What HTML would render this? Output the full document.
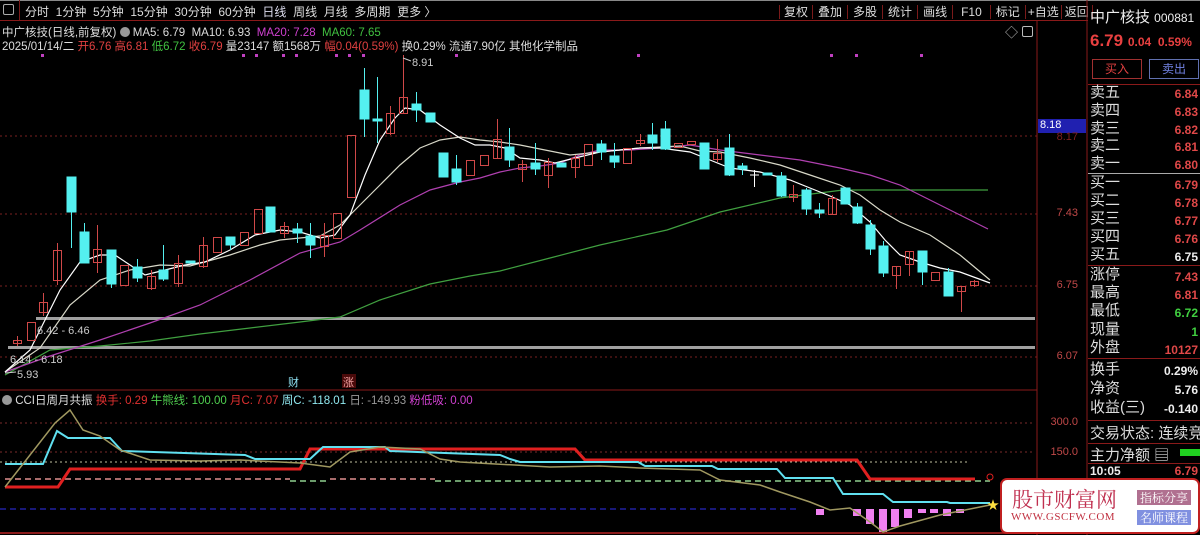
<!DOCTYPE html>
<html><head><meta charset="utf-8">
<style>
*{margin:0;padding:0;box-sizing:border-box}
body{width:1200px;height:535px;background:#000;overflow:hidden;position:relative;font-family:"Liberation Sans","Noto Sans CJK SC",sans-serif;color:#ccc}
.a{position:absolute;white-space:nowrap}
.tb{font-size:12px;color:#ddd;top:3px}
.rp{font-size:15px;color:#ddd;left:1090px}
.rv{font-size:12px;font-weight:bold;right:2px;text-align:right}
.ax{font-size:11px;color:#c04848;right:122px;text-align:right}
</style></head><body>
<div class="a" style="left:0;top:0;width:1200px;height:1px;background:#888"></div>
<div class="a" style="left:0;top:20px;width:1088px;height:1px;background:#8a1a1a"></div>
<!-- toolbar -->
<div class="a tb" style="left:3px;top:4px;width:11px;height:11px;border:1px solid #aaa;border-radius:2px"></div>
<div class="a" style="left:19px;top:0;width:1px;height:20px;background:#7a1a1a"></div>
<div class="a tb" style="left:25px">分时&nbsp;&nbsp;1分钟&nbsp;&nbsp;5分钟&nbsp;&nbsp;15分钟&nbsp;&nbsp;30分钟&nbsp;&nbsp;60分钟&nbsp;&nbsp;<span style="color:#dde">日线</span>&nbsp;&nbsp;周线&nbsp;&nbsp;月线&nbsp;&nbsp;多周期&nbsp;&nbsp;更多 〉</div>
<div class="a tb" style="left:779px;word-spacing:0">
<span style="border-left:1px solid #7a1a1a;padding:0 4px">复权</span><span style="border-left:1px solid #7a1a1a;padding:0 5px">叠加</span><span style="border-left:1px solid #7a1a1a;padding:0 5px">多股</span><span style="border-left:1px solid #7a1a1a;padding:0 5px">统计</span><span style="border-left:1px solid #7a1a1a;padding:0 5px">画线</span><span style="border-left:1px solid #7a1a1a;padding:0 8px">F10</span><span style="border-left:1px solid #7a1a1a;padding:0 5px">标记</span><span style="border-left:1px solid #7a1a1a;padding:0 2px">+自选</span><span style="border-left:1px solid #7a1a1a;border-right:1px solid #7a1a1a;padding:0 3px">返回</span></div>
<!-- info -->
<div class="a" style="left:2px;top:24px;font-size:11.5px;color:#ddd">中广核技(日线,前复权) <span style="display:inline-block;width:10px;height:10px;border-radius:5px;background:#999;vertical-align:-1px"></span> MA5: 6.79&nbsp; MA10: 6.93&nbsp; <span style="color:#d040d0">MA20: 7.28</span>&nbsp; <span style="color:#40c040">MA60: 7.65</span></div>
<div class="a" style="left:2px;top:38px;font-size:11.5px;color:#ddd">2025/01/14/二 <span style="color:#e04040">开6.76 高6.81</span> <span style="color:#40c040">低6.72</span> <span style="color:#e04040">收6.79</span> 量23147 额1568万 <span style="color:#e04040">幅0.04(0.59%)</span> 换0.29% 流通7.90亿 其他化学制品</div>
<div class="a" style="left:1005px;top:22px;font-size:13px;color:#bbb">◇</div>
<div class="a" style="left:1022px;top:26px;width:11px;height:11px;border:1px solid #bbb;border-radius:2px"></div>
<svg class="a" style="left:0;top:0" width="1088" height="535">
<g fill="#c040c0">
<rect x="41" y="54" width="3" height="3"/><rect x="242" y="54" width="3" height="3"/><rect x="255" y="54" width="3" height="3"/><rect x="282" y="54" width="3" height="3"/><rect x="295" y="54" width="3" height="3"/><rect x="335" y="54" width="3" height="3"/><rect x="348" y="54" width="3" height="3"/><rect x="362" y="54" width="3" height="3"/><rect x="455" y="54" width="3" height="3"/><rect x="637" y="54" width="3" height="3"/><rect x="830" y="54" width="3" height="3"/><rect x="855" y="54" width="3" height="3"/><rect x="920" y="54" width="3" height="3"/>
</g>
<g stroke="#7a2020" stroke-dasharray="2,3" stroke-width="1">
<line x1="0" y1="136" x2="1037" y2="136"/><line x1="0" y1="214" x2="1037" y2="214"/><line x1="0" y1="286" x2="1037" y2="286"/><line x1="0" y1="357" x2="1037" y2="357"/>
</g>
<rect x="36" y="317" width="999" height="3" fill="#a0a0a0"/>
<rect x="8" y="346" width="1027" height="3" fill="#a0a0a0"/>
<line x1="1037" y1="20" x2="1037" y2="535" stroke="#8a1a1a"/>
<line x1="1087" y1="0" x2="1087" y2="535" stroke="#8a1a1a"/>
<line x1="0" y1="390" x2="1037" y2="390" stroke="#8a1a1a"/>
<line x1="0" y1="533" x2="1037" y2="533" stroke="#8a1a1a" stroke-width="2"/>
<!-- MAs -->
<g fill="none" stroke-width="1.2">
<polyline stroke="#40a040" points="5,375 50,350 100,346 150,341 200,334 250,328 300,322 340,317 380,300 430,284 470,276 500,271 550,258 600,245 667,230 720,212 780,198 843,190 900,190 988,190"/>
<polyline stroke="#b040b0" points="5,372 50,356 100,340 150,323 200,305 250,280 300,253 340,242 360,230 400,205 430,190 460,182 480,178 500,172 520,168 540,166 560,163 580,155 600,150 630,150 660,148 690,145 720,150 760,155 800,160 840,168 870,175 900,185 930,200 960,215 988,229"/>
<polyline stroke="#d8d8c8" points="5,372 40,348 70,305 100,280 130,270 160,265 190,266 230,255 260,245 280,240 300,238 320,236 340,225 360,205 380,185 400,165 420,148 440,140 460,137 480,140 500,142 520,145 545,150 570,155 600,152 640,148 680,146 700,151 720,152 750,158 780,165 810,175 840,185 860,195 880,210 900,222 930,235 960,255 990,280"/>
<polyline stroke="#ffffff" points="5,372 30,350 60,290 80,262 100,255 115,255 130,265 145,275 165,270 185,265 205,262 230,250 255,235 280,230 300,232 320,238 335,235 350,215 365,175 380,140 395,118 405,108 420,110 440,125 460,138 475,145 490,145 505,148 520,158 540,160 555,163 575,158 600,152 620,150 640,148 660,148 690,152 710,160 730,168 760,172 790,180 810,188 830,196 850,205 870,222 885,240 900,255 920,262 940,268 960,272 990,283"/>
</g>
<!-- candles -->
<g stroke="#d04848" fill="none" stroke-width="1">
<line x1="17.5" y1="336" x2="17.5" y2="346"/><rect x="13.5" y="340.5" width="8" height="3"/>
<rect x="27.5" y="322.5" width="8" height="18"/>
<line x1="43.5" y1="293" x2="43.5" y2="316"/><rect x="39.5" y="302.5" width="8" height="10"/>
<line x1="57.5" y1="243" x2="57.5" y2="285"/><rect x="53.5" y="250.5" width="8" height="30"/>
<line x1="97.5" y1="225" x2="97.5" y2="273"/><rect x="93.5" y="249.5" width="8" height="13"/>
<rect x="120.5" y="265.5" width="8" height="20"/>
<line x1="151.5" y1="270" x2="151.5" y2="290"/><rect x="147.5" y="276.5" width="8" height="12"/>
<line x1="178.5" y1="255" x2="178.5" y2="287"/><rect x="174.5" y="263.5" width="8" height="20"/>
<line x1="203.5" y1="237" x2="203.5" y2="268"/><rect x="199.5" y="245.5" width="8" height="21"/>
<rect x="213.5" y="237.5" width="8" height="15"/>
<rect x="240.5" y="232.5" width="8" height="13"/>
<rect x="254.5" y="209.5" width="8" height="24"/>
<line x1="284.5" y1="222" x2="284.5" y2="238"/><rect x="280.5" y="226.5" width="8" height="7"/>
<line x1="324.5" y1="223" x2="324.5" y2="257"/><rect x="320.5" y="235.5" width="8" height="11"/>
<rect x="333.5" y="213.5" width="8" height="25"/>
<rect x="347.5" y="135.5" width="8" height="62"/>
<line x1="390.5" y1="106" x2="390.5" y2="135"/><rect x="386.5" y="113.5" width="8" height="20"/>
<line x1="403.5" y1="55" x2="403.5" y2="113"/><rect x="399.5" y="97.5" width="8" height="16"/>
<rect x="466.5" y="160.5" width="8" height="15"/>
<rect x="480.5" y="155.5" width="8" height="10"/>
<line x1="497.5" y1="119" x2="497.5" y2="158"/><rect x="493.5" y="139.5" width="8" height="19"/>
<line x1="522.5" y1="160" x2="522.5" y2="182"/><rect x="518.5" y="164.5" width="8" height="5"/>
<line x1="548.5" y1="158" x2="548.5" y2="188"/><rect x="544.5" y="162.5" width="8" height="13"/>
<line x1="575.5" y1="155" x2="575.5" y2="178"/><rect x="571.5" y="158.5" width="8" height="9"/>
<rect x="584.5" y="144.5" width="8" height="21"/>
<rect x="623.5" y="148.5" width="8" height="15"/>
<line x1="640.5" y1="134" x2="640.5" y2="146"/><rect x="636.5" y="140.5" width="8" height="3"/>
<rect x="674.5" y="143.5" width="8" height="4"/>
<rect x="687.5" y="141.5" width="8" height="3"/>
<line x1="717.5" y1="139" x2="717.5" y2="162"/><rect x="713.5" y="153.5" width="8" height="6"/>
<line x1="793.5" y1="185" x2="793.5" y2="202"/><rect x="789.5" y="194.5" width="8" height="3"/>
<line x1="832.5" y1="195" x2="832.5" y2="214"/><rect x="828.5" y="198.5" width="8" height="16"/>
<line x1="896.5" y1="266" x2="896.5" y2="289"/><rect x="892.5" y="266.5" width="8" height="9"/>
<line x1="909.5" y1="251" x2="909.5" y2="276"/><rect x="905.5" y="251.5" width="8" height="13"/>
<rect x="931.5" y="272.5" width="8" height="8"/>
<line x1="961.5" y1="286" x2="961.5" y2="312"/><rect x="957.5" y="286.5" width="8" height="5"/>
<line x1="974.5" y1="280" x2="974.5" y2="287"/><rect x="970.5" y="281.5" width="8" height="4"/>
</g>
<g fill="#54f0f0" stroke="#54f0f0" stroke-width="1">
<line x1="71.5" y1="177" x2="71.5" y2="248"/><rect x="67" y="177" width="9" height="35"/>
<line x1="84.5" y1="223" x2="84.5" y2="263"/><rect x="80" y="232" width="9" height="31"/>
<line x1="111.5" y1="250" x2="111.5" y2="288"/><rect x="107" y="250" width="9" height="34"/>
<line x1="137.5" y1="259" x2="137.5" y2="282"/><rect x="133" y="267" width="9" height="11"/>
<line x1="163.5" y1="245" x2="163.5" y2="281"/><rect x="159" y="270" width="9" height="9"/>
<rect x="186" y="261" width="9" height="2"/>
<line x1="230.5" y1="237" x2="230.5" y2="250"/><rect x="226" y="237" width="9" height="8"/>
<rect x="266" y="207" width="9" height="25"/>
<line x1="297.5" y1="223" x2="297.5" y2="243"/><rect x="293" y="229" width="9" height="4"/>
<line x1="310.5" y1="223" x2="310.5" y2="258"/><rect x="306" y="236" width="9" height="9"/>
<line x1="364.5" y1="68" x2="364.5" y2="137"/><rect x="360" y="90" width="9" height="29"/>
<line x1="377.5" y1="77" x2="377.5" y2="143"/><rect x="373" y="119" width="9" height="2"/>
<line x1="416.5" y1="92" x2="416.5" y2="122"/><rect x="412" y="104" width="9" height="6"/>
<rect x="426" y="113" width="9" height="9"/>
<rect x="439" y="153" width="9" height="24"/>
<line x1="456.5" y1="155" x2="456.5" y2="185"/><rect x="452" y="169" width="9" height="13"/>
<line x1="509.5" y1="128" x2="509.5" y2="167"/><rect x="505" y="147" width="9" height="13"/>
<line x1="535.5" y1="143" x2="535.5" y2="175"/><rect x="531" y="163" width="9" height="6"/>
<rect x="557" y="163" width="9" height="4"/>
<line x1="601.5" y1="140" x2="601.5" y2="160"/><rect x="597" y="144" width="9" height="8"/>
<line x1="614.5" y1="143" x2="614.5" y2="168"/><rect x="610" y="156" width="9" height="6"/>
<line x1="652.5" y1="123" x2="652.5" y2="150"/><rect x="648" y="135" width="9" height="8"/>
<line x1="665.5" y1="121" x2="665.5" y2="150"/><rect x="661" y="129" width="9" height="20"/>
<rect x="700" y="143" width="9" height="26"/>
<line x1="729.5" y1="134" x2="729.5" y2="176"/><rect x="725" y="148" width="9" height="27"/>
<line x1="742.5" y1="163" x2="742.5" y2="175"/><rect x="738" y="166" width="9" height="3"/>
<rect x="763" y="173" width="9" height="2"/>
<line x1="781.5" y1="172" x2="781.5" y2="197"/><rect x="777" y="176" width="9" height="20"/>
<line x1="806.5" y1="188" x2="806.5" y2="215"/><rect x="802" y="190" width="9" height="19"/>
<line x1="819.5" y1="203" x2="819.5" y2="218"/><rect x="815" y="210" width="9" height="3"/>
<rect x="841" y="188" width="9" height="16"/>
<line x1="857.5" y1="203" x2="857.5" y2="224"/><rect x="853" y="207" width="9" height="16"/>
<line x1="870.5" y1="220" x2="870.5" y2="255"/><rect x="866" y="225" width="9" height="24"/>
<line x1="883.5" y1="241" x2="883.5" y2="277"/><rect x="879" y="246" width="9" height="27"/>
<line x1="922.5" y1="251" x2="922.5" y2="285"/><rect x="918" y="251" width="9" height="21"/>
<line x1="948.5" y1="268" x2="948.5" y2="296"/><rect x="944" y="272" width="9" height="24"/>
</g>
<g stroke="#fff"><line x1="750" y1="175" x2="759" y2="175"/><line x1="754.5" y1="170" x2="754.5" y2="187"/></g>
<g font-size="11" fill="#ccc" font-family="Liberation Sans">
<text x="412" y="66">8.91</text><line x1="403" y1="58" x2="411" y2="61" stroke="#ccc"/>
<text x="37" y="334">6.42 - 6.46</text>
<text x="10" y="363">6.14 - 6.18</text>
<text x="17" y="378">5.93</text><line x1="5" y1="373" x2="16" y2="372" stroke="#ccc"/>
</g>
<text x="288" y="386" font-size="11" fill="#8ee0f0" font-family="Noto Sans CJK SC">财</text>
<rect x="342" y="374" width="14" height="14" fill="#4a0a0a"/>
<text x="343" y="386" font-size="11" fill="#f0a0a0" font-family="Noto Sans CJK SC">涨</text>
<!-- indicator -->
<g stroke-dasharray="2,3" stroke-width="1">
<line x1="0" y1="423" x2="1035" y2="423" stroke="#7a2a2a"/>
<line x1="0" y1="452" x2="1035" y2="452" stroke="#7a2a2a"/>
<line x1="0" y1="462" x2="970" y2="462" stroke="#c0c0a0"/>
</g>
<line x1="0" y1="509" x2="800" y2="509" stroke="#2020a0" stroke-dasharray="6,4" stroke-width="1.5"/>
<g stroke-dasharray="6,4" stroke-width="1.5">
<line x1="5" y1="479" x2="290" y2="479" stroke="#e09090"/>
<line x1="330" y1="479" x2="435" y2="479" stroke="#e09090"/>
<line x1="290" y1="481" x2="330" y2="481" stroke="#90d090"/>
<line x1="435" y1="481" x2="990" y2="481" stroke="#90d090"/>
</g>
<g fill="#f080f0">
<rect x="816" y="509" width="8" height="6"/><rect x="853" y="509" width="8" height="7"/><rect x="866" y="509" width="8" height="15"/><rect x="879" y="509" width="8" height="23"/><rect x="891" y="509" width="8" height="18"/><rect x="904" y="509" width="8" height="9"/><rect x="918" y="509" width="8" height="4"/><rect x="930" y="509" width="8" height="4"/><rect x="943" y="509" width="8" height="7"/><rect x="956" y="509" width="8" height="4"/>
</g>
<polyline fill="none" stroke="#e02020" stroke-width="3" points="5,487 58,487 70,469 300,469 310,449 575,449 585,460 857,460 870,479 975,479"/>
<polyline fill="none" stroke="#60e0f0" stroke-width="2" points="5,464 43,464 57,431 68,438 110,438 122,451 245,455 255,459 310,459 323,447 385,447 390,451 500,455 510,459 520,462 638,462 645,466 712,466 718,469 777,469 785,478 833,478 843,494 883,494 893,502 947,502 950,503 990,503"/>
<polyline fill="none" stroke="#a09860" stroke-width="1.5" points="5,487 55,423 70,410 83,430 100,436 120,450 150,460 200,461 240,460 300,463 330,467 350,452 380,447 420,449 440,459 460,462 550,467 600,466 640,468 700,470 720,480 760,485 780,492 810,502 830,510 850,508 870,522 883,532 900,526 940,515 990,505"/>
<text x="987" y="509" font-size="12" fill="#ffe040">★</text>
<circle cx="990" cy="477" r="3" fill="none" stroke="#e02020"/>
</svg>
<div class="a" style="left:2px;top:392px;font-size:11.5px;color:#ddd"><span style="display:inline-block;width:10px;height:10px;border-radius:5px;background:#999;vertical-align:-1px"></span> CCI日周月共振 <span style="color:#e03030">换手: 0.29</span> <span style="color:#50d050">牛熊线: 100.00</span> <span style="color:#e03030">月C: 7.07</span> <span style="color:#90e8f0">周C: -118.01</span> <span style="color:#999">日: -149.93</span> <span style="color:#d040d0">粉低吸: 0.00</span></div>
<!-- axis -->
<div class="a" style="left:1038px;top:119px;width:48px;height:14px;background:#2020b0;color:#fff;font-size:11px;padding-left:2px">8.18</div>
<div class="a ax" style="top:131px;color:#802020">8.17</div>
<div class="a ax" style="top:207px">7.43</div>
<div class="a ax" style="top:279px">6.75</div>
<div class="a ax" style="top:350px">6.07</div>
<div class="a ax" style="top:416px">300.0</div>
<div class="a ax" style="top:446px">150.0</div>
<!-- right panel -->
<div class="a" style="left:1090px;top:6px;font-size:15px;color:#eee">中广核技 <span style="font-size:12px">000881</span></div>
<div class="a" style="left:1090px;top:31px;font-size:17px;font-weight:bold;color:#e84040">6.79 <span style="font-size:12px">0.04&nbsp; 0.59%</span></div>
<div class="a" style="left:1092px;top:59px;width:50px;height:20px;border:1px solid #a03030;color:#e04040;font-size:12px;text-align:center;line-height:18px">买入</div>
<div class="a" style="left:1149px;top:59px;width:50px;height:20px;border:1px solid #6070b0;color:#7080e0;font-size:12px;text-align:center;line-height:18px">卖出</div>
<div class="a" style="left:1088px;top:84px;width:112px;height:1px;background:#8a1a1a"></div>
<div class="a" style="left:1088px;top:173px;width:112px;height:1px;background:#aaa"></div>
<div class="a" style="left:1088px;top:265px;width:112px;height:1px;background:#8a1a1a"></div>
<div class="a" style="left:1088px;top:358px;width:112px;height:1px;background:#8a1a1a"></div>
<div class="a" style="left:1088px;top:420px;width:112px;height:1px;background:#8a1a1a"></div>
<div class="a" style="left:1088px;top:443px;width:112px;height:1px;background:#8a1a1a"></div>
<div class="a" style="left:1088px;top:463px;width:112px;height:1px;background:#8a1a1a"></div>
<div class="a rp" style="top:84px;line-height:17.8px">卖五<br>卖四<br>卖三<br>卖二<br>卖一</div>
<div class="a rv" style="top:86px;line-height:17.8px;color:#e04848">6.84<br>6.83<br>6.82<br>6.81<br>6.80</div>
<div class="a rp" style="top:174px;line-height:18px">买一<br>买二<br>买三<br>买四<br>买五</div>
<div class="a rv" style="top:176px;line-height:18px;color:#e04848">6.79<br>6.78<br>6.77<br>6.76<br><span style="color:#eee">6.75</span></div>
<div class="a rp" style="top:266px;line-height:18.2px">涨停<br>最高<br>最低<br>现量<br>外盘</div>
<div class="a rv" style="top:268px;line-height:18.2px;color:#e04848">7.43<br>6.81<br><span style="color:#40d040">6.72</span><br><span style="color:#40d040">1</span><br>10127</div>
<div class="a rp" style="top:360px;line-height:19px">换手<br>净资<br>收益(三)</div>
<div class="a rv" style="top:362px;line-height:19px;color:#eee">0.29%<br>5.76<br>-0.140</div>
<div class="a rp" style="top:422px">交易状态: 连续竞</div>
<div class="a rp" style="top:444px">主力净额 ▤</div>
<div class="a" style="left:1180px;top:449px;width:20px;height:7px;background:#20d020"></div>
<div class="a" style="left:1090px;top:464px;font-size:12px;font-weight:bold;color:#eee">10:05</div>
<div class="a rv" style="top:464px;color:#e04848">6.79</div>
<!-- watermark -->
<div class="a" style="left:1000px;top:478px;width:200px;height:56px;background:#fff;border:2px solid #c02020;border-radius:7px"></div>
<div class="a" style="left:1012px;top:484px;font-size:21px;color:#c03050;font-family:'Noto Serif CJK SC',serif">股市财富网</div>
<div class="a" style="left:1011px;top:511px;font-size:11px;color:#c03040;font-family:'Liberation Serif',serif;letter-spacing:0.5px">WWW.GSCFW.COM</div>
<div class="a" style="left:1137px;top:490px;width:54px;height:15px;background:#b07090;color:#fff;font-size:12px;line-height:15px;text-align:center;font-family:'Noto Serif CJK SC',serif">指标分享</div>
<div class="a" style="left:1137px;top:510px;width:54px;height:15px;background:#8090e0;color:#fff;font-size:12px;line-height:15px;text-align:center;font-family:'Noto Serif CJK SC',serif">名师课程</div>
</body></html>
